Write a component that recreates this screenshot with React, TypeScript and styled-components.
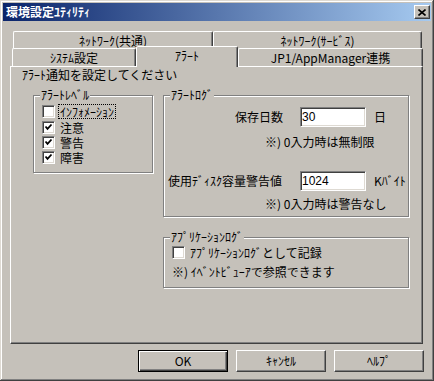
import React from 'react';
import styled, { createGlobalStyle, css } from 'styled-components';

const FACE = '#c5c1ba';

const GlobalStyle = createGlobalStyle`
  body {
    margin: 0;
    background: ${FACE};
  }
`;

const Window = styled.div`
  box-sizing: border-box;
  width: 434px;
  height: 381px;
  padding: 3px;
  display: flex;
  flex-direction: column;
  background: ${FACE};
  box-shadow: inset -1px -1px #404040, inset 1px 1px #dedad3, inset -2px -2px #808080, inset 2px 2px #fff;
  font-family: "Noto Sans CJK JP", "MS UI Gothic", sans-serif;
  font-size: 12px;
  line-height: 14px;
  color: #000;
`;

const TitleBar = styled.div`
  height: 18px;
  display: flex;
  align-items: center;
  justify-content: space-between;
  padding: 0 1px 0 3px;
  background: linear-gradient(to right, #0a246a, #a6caf0);
`;

const Title = styled.span`
  color: #fff;
  font-weight: bold;
  font-size: 12px;
`;

const CloseButton = styled.div`
  box-sizing: border-box;
  width: 16px;
  height: 14px;
  display: flex;
  align-items: center;
  justify-content: center;
  background: ${FACE};
  border: 1px solid;
  border-color: #fff #404040 #404040 #fff;
  box-shadow: inset -1px -1px #808080;
`;

const Content = styled.div`
  padding: 10px 7px 0 7px;
  display: flex;
  flex-direction: column;
`;

const TabRow = styled.div<{ $indent: number; $h: number }>`
  display: flex;
  height: ${p => p.$h}px;
  margin-left: ${p => p.$indent}px;
`;

const Tab = styled.div<{ $w: number; $active?: boolean }>`
  box-sizing: border-box;
  width: ${p => p.$w}px;
  height: 100%;
  display: flex;
  align-items: center;
  justify-content: center;
  padding-top: 1px;
  background: ${FACE};
  border-top: 1px solid #fff;
  border-left: 1px solid #fff;
  border-right: 1px solid #404040;
  border-radius: 2px 2px 0 0;
  box-shadow: inset -1px 0 #808080;
  ${p => p.$active && css`
    position: relative;
    z-index: 1;
    height: calc(100% + 3px);
    margin-top: -2px;
    padding-bottom: 3px;
  `}
`;

const Panel = styled.div`
  box-sizing: border-box;
  width: 413px;
  height: 278px;
  border: 1px solid;
  border-color: #fff #404040 #404040 #fff;
  box-shadow: inset -1px -1px #808080;
`;

const Intro = styled.div`
  margin: 1px 0 0 11px;
`;

const Columns = styled.div`
  display: flex;
  align-items: flex-start;
  gap: 10px;
  margin: 13px 0 0 22px;
`;

const Stack = styled.div`
  display: flex;
  flex-direction: column;
  gap: 20px;
`;

const Group = styled.div<{ $w: number; $h: number; $pad: string }>`
  position: relative;
  box-sizing: border-box;
  width: ${p => p.$w}px;
  height: ${p => p.$h}px;
  padding: ${p => p.$pad};
  border: 1px solid #808080;
  box-shadow: inset 1px 1px #fff, 1px 1px #fff;
`;

const Caption = styled.span`
  position: absolute;
  top: -8px;
  left: 6px;
  padding: 0 1px;
  background: ${FACE};
`;

const CheckRow = styled.label`
  display: flex;
  align-items: center;
  gap: 3px;
  height: 15.4px;
`;

const Box = styled.span`
  box-sizing: border-box;
  width: 13px;
  height: 13px;
  display: flex;
  align-items: center;
  justify-content: center;
  background: #fff;
  border: 1px solid;
  border-color: #808080 #fff #fff #808080;
  box-shadow: inset 1px 1px #404040, inset -1px -1px #dedad3;
`;

const CheckText = styled.span<{ $focus?: boolean }>`
  padding: 0 1px;
  line-height: 13px;
  border: 1px ${p => (p.$focus ? 'dotted #000' : 'solid transparent')};
`;

const FieldRow = styled.div<{ $top: number }>`
  display: flex;
  align-items: center;
  height: 20px;
  margin-top: ${p => p.$top}px;
`;

const FieldLabel = styled.span<{ $align: 'left' | 'right' }>`
  box-sizing: border-box;
  width: 132px;
  text-align: ${p => p.$align};
  padding-right: ${p => (p.$align === 'right' ? 17 : 0)}px;
`;

const Input = styled.div`
  box-sizing: border-box;
  width: 66px;
  height: 20px;
  display: flex;
  align-items: center;
  padding: 0 1px;
  background: #fff;
  border: 1px solid;
  border-color: #808080 #fff #fff #808080;
  box-shadow: inset 1px 1px #404040, inset -1px -1px #dedad3;
  font-family: "Liberation Sans", Arial, sans-serif;
  font-size: 12px;
`;

const Unit = styled.span`
  padding-left: 8px;
`;

const Note = styled.div<{ $top: number; $indent: number }>`
  margin-top: ${p => p.$top}px;
  padding-left: ${p => p.$indent}px;
`;

const ButtonRow = styled.div`
  display: flex;
  justify-content: flex-end;
  gap: 8px;
  margin-top: 6px;
`;

const Button = styled.div<{ $default?: boolean }>`
  box-sizing: border-box;
  width: 90px;
  height: 22px;
  display: flex;
  align-items: center;
  justify-content: center;
  background: ${FACE};
  border: 1px solid;
  border-color: #fff #404040 #404040 #fff;
  box-shadow: inset -1px -1px #808080;
  ${p => p.$default && css`
    border-color: #000;
    box-shadow: inset 1px 1px #fff, inset -1px -1px #404040, inset -2px -2px #808080;
  `}
`;

const Check = ({ on }: { on: boolean }) => (
  <Box>
    {on && (
      <svg width="9" height="9" viewBox="0 0 9 9">
        <path d="M1.5 3.5 L3.5 5.8 L7.5 1.5" fill="none" stroke="#000" strokeWidth="1.8" />
      </svg>
    )}
  </Box>
);

const levels = [
  { label: 'ｲﾝﾌｫﾒｰｼｮﾝ', on: false, focus: true },
  { label: '注意', on: true },
  { label: '警告', on: true },
  { label: '障害', on: true },
];

const App = () => (
  <Window>
    <GlobalStyle />
    <TitleBar>
      <Title>環境設定ﾕﾃｨﾘﾃｨ</Title>
      <CloseButton>
        <svg width="8" height="7" viewBox="0 0 8 7">
          <path d="M0.5 0.5 L7.5 6.5 M7.5 0.5 L0.5 6.5" stroke="#000" strokeWidth="1.6" />
        </svg>
      </CloseButton>
    </TitleBar>
    <Content>
      <TabRow $indent={3} $h={17}>
        <Tab $w={200}>ﾈｯﾄﾜｰｸ(共通)</Tab>
        <Tab $w={209}>ﾈｯﾄﾜｰｸ(ｻｰﾋﾞｽ)</Tab>
      </TabRow>
      <TabRow $indent={2} $h={18}>
        <Tab $w={124}>ｼｽﾃﾑ設定</Tab>
        <Tab $w={102} $active>ｱﾗｰﾄ</Tab>
        <Tab $w={185}>JP1/AppManager連携</Tab>
      </TabRow>
      <Panel>
        <Intro>ｱﾗｰﾄ通知を設定してください</Intro>
        <Columns>
          <Group $w={120} $h={78} $pad="8px 0 0 8px">
            <Caption>ｱﾗｰﾄﾚﾍﾞﾙ</Caption>
            {levels.map(l => (
              <CheckRow key={l.label}>
                <Check on={l.on} />
                <CheckText $focus={l.focus}>{l.label}</CheckText>
              </CheckRow>
            ))}
          </Group>
          <Stack>
            <Group $w={246} $h={122} $pad="0 0 0 4px">
              <Caption>ｱﾗｰﾄﾛｸﾞ</Caption>
              <FieldRow $top={11}>
                <FieldLabel $align="right">保存日数</FieldLabel>
                <Input>30</Input>
                <Unit>日</Unit>
              </FieldRow>
              <Note $top={8} $indent={97}>※) 0入力時は無制限</Note>
              <FieldRow $top={22}>
                <FieldLabel $align="left">使用ﾃﾞｨｽｸ容量警告値</FieldLabel>
                <Input>1024</Input>
                <Unit>Kﾊﾞｲﾄ</Unit>
              </FieldRow>
              <Note $top={6} $indent={97}>※) 0入力時は警告なし</Note>
            </Group>
            <Group $w={246} $h={51} $pad="7px 0 0 8px">
              <Caption>ｱﾌﾟﾘｹｰｼｮﾝﾛｸﾞ</Caption>
              <CheckRow>
                <Check on={false} />
                <CheckText>ｱﾌﾟﾘｹｰｼｮﾝﾛｸﾞとして記録</CheckText>
              </CheckRow>
              <Note $top={5} $indent={0}>※) ｲﾍﾞﾝﾄﾋﾞｭｰｱで参照できます</Note>
            </Group>
          </Stack>
        </Columns>
      </Panel>
      <ButtonRow>
        <Button $default>OK</Button>
        <Button>ｷｬﾝｾﾙ</Button>
        <Button>ﾍﾙﾌﾟ</Button>
      </ButtonRow>
    </Content>
  </Window>
);

export default App;
